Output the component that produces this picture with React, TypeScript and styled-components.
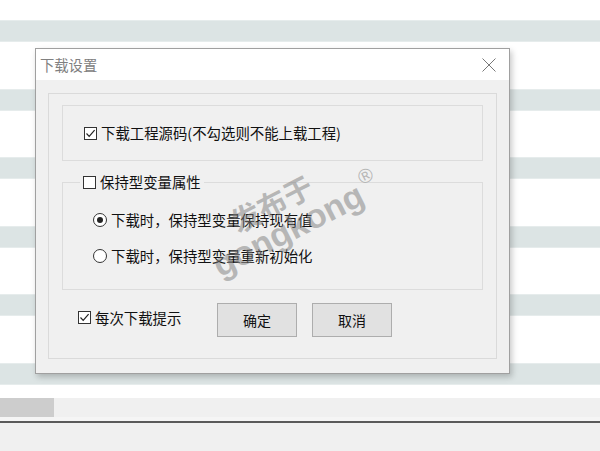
import React from 'react'
import styled, {createGlobalStyle} from 'styled-components'

const GlobalStyle = createGlobalStyle`
  html, body {
    margin: 0;
    padding: 0;
    background: #fff;
    font-family: "Noto Sans CJK SC", "Noto Sans", sans-serif;
  }
`

const STRIPES = 6

const Checkbox = ({checked}: {checked?: boolean}) => (
  <Box>
    {checked &&
      <svg width="11" height="11" viewBox="0 0 11 11">
        <path d="M1.5 5.5 L4.2 8.3 L9.6 2.2" fill="none" stroke="#222" strokeWidth="1.2" />
      </svg>}
  </Box>
)

const Radio = ({checked}: {checked?: boolean}) => (
  <Circle>{checked && <Dot />}</Circle>
)

export default function App() {
  return (
    <Screen>
      <GlobalStyle />
      <Table>
        <TopGap />
        {Array.from({length: STRIPES}).map((_, i) => (
          <React.Fragment key={i}>
            <Row $striped $h={22} />
            <Row $h={i === STRIPES - 1 ? 13 : 46.6} />
          </React.Fragment>
        ))}
      </Table>
      <HScroll>
        <Thumb />
      </HScroll>
      <StatusPanel />

      <Dialog>
        <TitleBar>
          <Title>下载设置</Title>
          <CloseBtn>
            <svg width="14" height="14" viewBox="0 0 14 14">
              <path d="M0.5 0.5 L13.5 13.5 M13.5 0.5 L0.5 13.5" stroke="#777" strokeWidth="1" />
            </svg>
          </CloseBtn>
        </TitleBar>
        <Body>
          <Frame>
            <Group>
              <CheckLabel>
                <Checkbox checked />
                <span>下载工程源码(不勾选则不能上载工程)</span>
              </CheckLabel>
            </Group>
            <FieldGroup>
              <Legend>
                <CheckLabel>
                  <Checkbox />
                  <span>保持型变量属性</span>
                </CheckLabel>
              </Legend>
              <RadioList>
                <CheckLabel>
                  <Radio checked />
                  <span>下载时，保持型变量保持现有值</span>
                </CheckLabel>
                <CheckLabel>
                  <Radio />
                  <span>下载时，保持型变量重新初始化</span>
                </CheckLabel>
              </RadioList>
            </FieldGroup>
            <Footer>
              <PromptLabel>
                <Checkbox checked />
                <span>每次下载提示</span>
              </PromptLabel>
              <Button>确定</Button>
              <Button>取消</Button>
            </Footer>
          </Frame>
        </Body>
      </Dialog>

      <Watermark>
        <WmCn>发布于</WmCn>
        <WmEn>gongkong<sup>®</sup></WmEn>
      </Watermark>
    </Screen>
  )
}

const Screen = styled.div`
  position: relative;
  width: 600px;
  height: 451px;
  overflow: hidden;
  display: flex;
  flex-direction: column;
`

const Table = styled.div`
  display: flex;
  flex-direction: column;
`

const TopGap = styled.div`
  height: 20px;
  background: #fff;
`

const Row = styled.div<{$striped?: boolean; $h: number}>`
  height: ${p => p.$h}px;
  background: ${p => (p.$striped ? '#dce4e4' : '#fff')};
  box-shadow: ${p => (p.$striped ? 'inset 0 1px 0 #e6ecec, inset 0 -1px 0 #e6ecec' : 'none')};
`

const HScroll = styled.div`
  height: 19px;
  background: #f0f0f0;
  border-bottom: 4px solid #f5f5f5;
  display: flex;
`

const Thumb = styled.div`
  width: 54px;
  background: #cdcdcd;
`

const StatusPanel = styled.div`
  flex: 1;
  background: #f0f0f0;
  border-top: 2px solid #5a5a5a;
`

const Dialog = styled.div`
  position: absolute;
  left: 35px;
  top: 48px;
  width: 475px;
  height: 326px;
  box-sizing: border-box;
  border: 1px solid #a0a0a0;
  background: #f0f0f0;
  box-shadow: 2px 3px 6px rgba(0, 0, 0, 0.22);
  display: flex;
  flex-direction: column;
`

const TitleBar = styled.div`
  height: 31px;
  background: #fff;
  display: flex;
  align-items: center;
  justify-content: space-between;
  padding: 0 13px 0 4px;
`

const Title = styled.div`
  font-size: 14.3px;
  color: #808080;
`

const CloseBtn = styled.div`
  width: 14px;
  height: 14px;
  display: flex;
`

const Body = styled.div`
  flex: 1;
  padding: 13px 12px 14px 12px;
  display: flex;
`

const Frame = styled.div`
  flex: 1;
  border: 1px solid #dadada;
  padding: 11px 13px 0 13px;
  display: flex;
  flex-direction: column;
`

const Group = styled.div`
  height: 56px;
  box-sizing: border-box;
  border: 1px solid #dcdcdc;
  display: flex;
  align-items: center;
  padding-left: 21px;
`

const CheckLabel = styled.label`
  display: flex;
  align-items: center;
  gap: 4px;
  height: 20px;
  font-size: 14.4px;
  line-height: 20px;
  color: #111;
  white-space: nowrap;
`

const Box = styled.span`
  width: 13px;
  height: 13px;
  box-sizing: border-box;
  border: 1px solid #333;
  background: #fff;
  display: flex;
  align-items: center;
  justify-content: center;
  flex-shrink: 0;
`

const Circle = styled.span`
  width: 14px;
  height: 14px;
  box-sizing: border-box;
  border: 1px solid #333;
  border-radius: 50%;
  background: #fff;
  display: flex;
  align-items: center;
  justify-content: center;
  flex-shrink: 0;
`

const Dot = styled.span`
  width: 6px;
  height: 6px;
  border-radius: 50%;
  background: #222;
`

const FieldGroup = styled.fieldset`
  margin: 11px 0 0 0;
  padding: 0;
  min-width: 0;
  height: 118px;
  box-sizing: border-box;
  border: 1px solid #dcdcdc;
`

const Legend = styled.legend`
  margin-left: 17px;
  padding: 0 3px;
`

const RadioList = styled.div`
  display: flex;
  flex-direction: column;
  gap: 16px;
  padding: 18px 0 0 30px;
`

const Footer = styled.div`
  display: flex;
  align-items: center;
  margin-top: 13px;
  padding-left: 16px;
`

const PromptLabel = styled(CheckLabel)`
  width: 139px;
  margin-bottom: 5px;
`

const Button = styled.button`
  width: 80px;
  height: 34px;
  margin-right: 15px;
  background: #e1e1e1;
  border: 1px solid #adadad;
  font-family: "Noto Sans CJK SC", sans-serif;
  font-size: 14px;
  color: #111;
  padding: 0;
`

const Watermark = styled.div`
  position: absolute;
  left: 223px;
  top: 220px;
  transform: rotate(-27deg);
  transform-origin: left bottom;
  color: rgba(125, 125, 125, 0.5);
  pointer-events: none;
  font-weight: bold;
`

const WmCn = styled.div`
  font-family: "Noto Sans CJK SC", sans-serif;
  font-size: 29px;
  line-height: 26px;
  padding-left: 36px;
  margin-bottom: -12px;
`

const WmEn = styled.div`
  font-family: "Liberation Sans", Arial, sans-serif;
  font-size: 34px;
  line-height: 36px;
  sup {
    font-size: 20px;
    font-weight: normal;
    vertical-align: 18px;
    margin-left: 4px;
  }
`
